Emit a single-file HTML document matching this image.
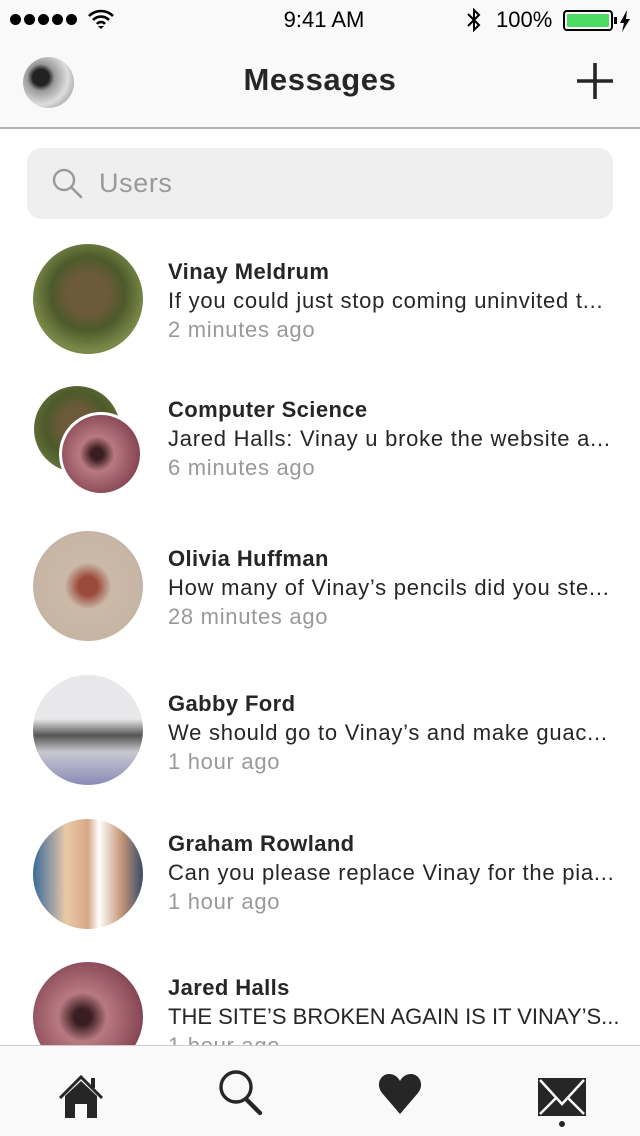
<!DOCTYPE html>
<html><head><meta charset="utf-8"><style>
*{margin:0;padding:0;box-sizing:border-box}
body{width:640px;height:1136px;overflow:hidden;background:#fff;font-family:"Liberation Sans",sans-serif;position:relative;color:#262626}
.sb{position:absolute;top:0;left:0;width:640px;height:40px;background:#f9f9f9}
.hdr{position:absolute;top:40px;left:0;width:640px;height:89px;background:#f9f9f9;border-bottom:2px solid #b2b2b2}
.title{position:absolute;top:62px;left:0;width:640px;text-align:center;font-size:31px;font-weight:bold;color:#262626;letter-spacing:0.6px}
.search{position:absolute;left:27px;top:148px;width:586px;height:71px;border-radius:14px;background:#efefef}
.search span{position:absolute;left:72px;top:20px;font-size:27px;color:#999;letter-spacing:0.6px}
.av{position:absolute;left:33px;width:110px;height:110px;border-radius:50%}
.name{position:absolute;left:168px;font-size:22px;font-weight:bold;color:#262626;white-space:nowrap;letter-spacing:0.4px}
.msg{position:absolute;left:168px;font-size:22px;color:#262626;white-space:nowrap;letter-spacing:0.75px}
.time{position:absolute;left:168px;font-size:22px;color:#999;white-space:nowrap;letter-spacing:0.7px}
.tab{position:absolute;top:1045px;left:0;width:640px;height:91px;background:#f9f9f9;border-top:1px solid #ccc}
</style></head><body>
<div class="sb">
  <div style="position:absolute;left:10px;top:14px;display:flex;gap:3px">
    <i style="width:11px;height:11px;border-radius:50%;background:#000;display:block"></i><i style="width:11px;height:11px;border-radius:50%;background:#000;display:block"></i><i style="width:11px;height:11px;border-radius:50%;background:#000;display:block"></i><i style="width:11px;height:11px;border-radius:50%;background:#000;display:block"></i><i style="width:11px;height:11px;border-radius:50%;background:#000;display:block"></i>
  </div>
  <svg style="position:absolute;left:88px;top:9px" width="26" height="20" viewBox="0 0 26 20"><path d="M1 7a17 17 0 0 1 24 0M5 11a11 11 0 0 1 16 0M9 15a5 5 0 0 1 8 0" stroke="#000" stroke-width="2.6" fill="none"/><path d="M13 20l-3-3h6z" fill="#000"/></svg>
  <div style="position:absolute;left:0;width:648px;top:7px;text-align:center;font-size:22px;color:#000">9:41 AM</div>
  <svg style="position:absolute;left:466px;top:8px" width="16" height="24" viewBox="0 0 16 24"><path d="M2 6l11 11-5 5V2l5 5L2 18" stroke="#000" stroke-width="2" fill="none"/></svg>
  <div style="position:absolute;left:496px;top:7px;font-size:22px;color:#000">100%</div>
  <div style="position:absolute;left:563px;top:10px;width:50px;height:21px;border:2px solid #000;border-radius:4px;padding:2px"><div style="width:100%;height:100%;background:#4cd964;border-radius:1px"></div></div>
  <div style="position:absolute;left:614px;top:17px;width:3px;height:7px;background:#000"></div>
  <svg style="position:absolute;left:619px;top:10px" width="12" height="22" viewBox="0 0 12 22"><path d="M8 0L1 13h4l-2 9 8-13H7z" fill="#000"/></svg>
</div>
<div class="hdr"></div>
<div style="position:absolute;left:23px;top:57px;width:51px;height:51px;border-radius:50%;background:radial-gradient(circle at 35% 40%,#222 0 18%,#999 30%,#ddd 60%,#777 100%)"></div>
<div class="title">Messages</div>
<svg style="position:absolute;left:575px;top:61px" width="40" height="40" viewBox="0 0 40 40"><path d="M20 2v36M2 20h36" stroke="#262626" stroke-width="3.6"/></svg>

<div class="search"><svg style="position:absolute;left:25px;top:20px" width="32" height="32" viewBox="0 0 32 32"><circle cx="12" cy="12" r="10" stroke="#999" stroke-width="2.4" fill="none"/><path d="M19 19l10 10" stroke="#999" stroke-width="2.6" stroke-linecap="round"/></svg><span>Users</span></div>

<div class="av" style="top:244px;background:radial-gradient(circle at 50% 45%,#6d5a3a 0 25%,#4c5a2a 45%,#7b8a4a 70%,#556b2f 100%)"></div>
<div class="name" style="top:259px">Vinay Meldrum</div>
<div class="msg" style="top:288px">If you could just stop coming uninvited t...</div>
<div class="time" style="top:317px">2 minutes ago</div>

<div style="position:absolute;left:34px;top:386px;width:86px;height:86px;border-radius:50%;background:radial-gradient(circle at 50% 45%,#6d5a3a 0 25%,#4c5a2a 50%,#7b8a4a 100%)"></div>
<div style="position:absolute;left:59px;top:412px;width:84px;height:84px;border-radius:50%;border:3px solid #fff;background:radial-gradient(circle at 45% 50%,#3a1d20 0 10%,#b87a80 30%,#8a4a58 70%,#5a2a38 100%)"></div>
<div class="name" style="top:397px">Computer Science</div>
<div class="msg" style="top:426px">Jared Halls: Vinay u broke the website a...</div>
<div class="time" style="top:455px">6 minutes ago</div>

<div class="av" style="top:531px;background:radial-gradient(circle at 50% 50%,#9a4a3a 0 12%,#cbb9a8 30%,#c2b2a1 100%)"></div>
<div class="name" style="top:546px">Olivia Huffman</div>
<div class="msg" style="top:575px">How many of Vinay’s pencils did you ste...</div>
<div class="time" style="top:604px">28 minutes ago</div>

<div class="av" style="top:675px;background:linear-gradient(180deg,#e8e8ea 0 40%,#555 55%,#c8c8d0 70%,#8a8ab8 100%)"></div>
<div class="name" style="top:691px">Gabby Ford</div>
<div class="msg" style="top:720px">We should go to Vinay’s and make guac...</div>
<div class="time" style="top:749px">1 hour ago</div>

<div class="av" style="top:819px;background:linear-gradient(90deg,#3a6a9a 0,#e8c8a8 30%,#d8a888 50%,#ffffff 60%,#c89878 80%,#3a4a6a 100%)"></div>
<div class="name" style="top:831px">Graham Rowland</div>
<div class="msg" style="top:860px">Can you please replace Vinay for the pia...</div>
<div class="time" style="top:889px">1 hour ago</div>

<div class="av" style="top:962px;background:radial-gradient(circle at 45% 50%,#3a1d20 0 10%,#b87a80 30%,#8a4a58 70%,#5a2a38 100%)"></div>
<div class="name" style="top:975px">Jared Halls</div>
<div class="msg" style="top:1004px;letter-spacing:0">THE SITE’S BROKEN AGAIN IS IT VINAY’S...</div>
<div class="time" style="top:1033px">1 hour ago</div>

<div class="tab">
  <svg style="position:absolute;left:58px;top:28px" width="46" height="44" viewBox="0 0 46 44"><path d="M2 24L23 3l21 21" stroke="#262626" stroke-width="3" fill="none"/><rect x="33" y="4" width="4" height="10" fill="#262626"/><path d="M7 22L23 7l16 15v22H29V30H17v14H7z" fill="#262626"/></svg>
  <svg style="position:absolute;left:218px;top:23px" width="46" height="50" viewBox="0 0 46 50"><circle cx="18" cy="18" r="15" stroke="#262626" stroke-width="3.4" fill="none"/><path d="M28 30l14 14" stroke="#262626" stroke-width="4.4" stroke-linecap="round"/></svg>
  <svg style="position:absolute;left:377px;top:26px" width="46" height="44" viewBox="0 0 46 44"><path d="M23 42L5 21C-2 12 4 2 12 2c5 0 9 3 11 7 2-4 6-7 11-7 8 0 14 10 7 19z" fill="#262626"/></svg>
  <svg style="position:absolute;left:537px;top:31px" width="50" height="40" viewBox="0 0 50 40"><path d="M1 1h48v38H1z" fill="#262626"/><path d="M3 3l22 24L47 3" stroke="#f9f9f9" stroke-width="2.5" fill="none"/><path d="M3 37l16-16M47 37L31 21" stroke="#f9f9f9" stroke-width="2.5"/></svg>
  <div style="position:absolute;left:559px;top:75px;width:6px;height:6px;border-radius:50%;background:#262626"></div>
</div>
</body></html>
